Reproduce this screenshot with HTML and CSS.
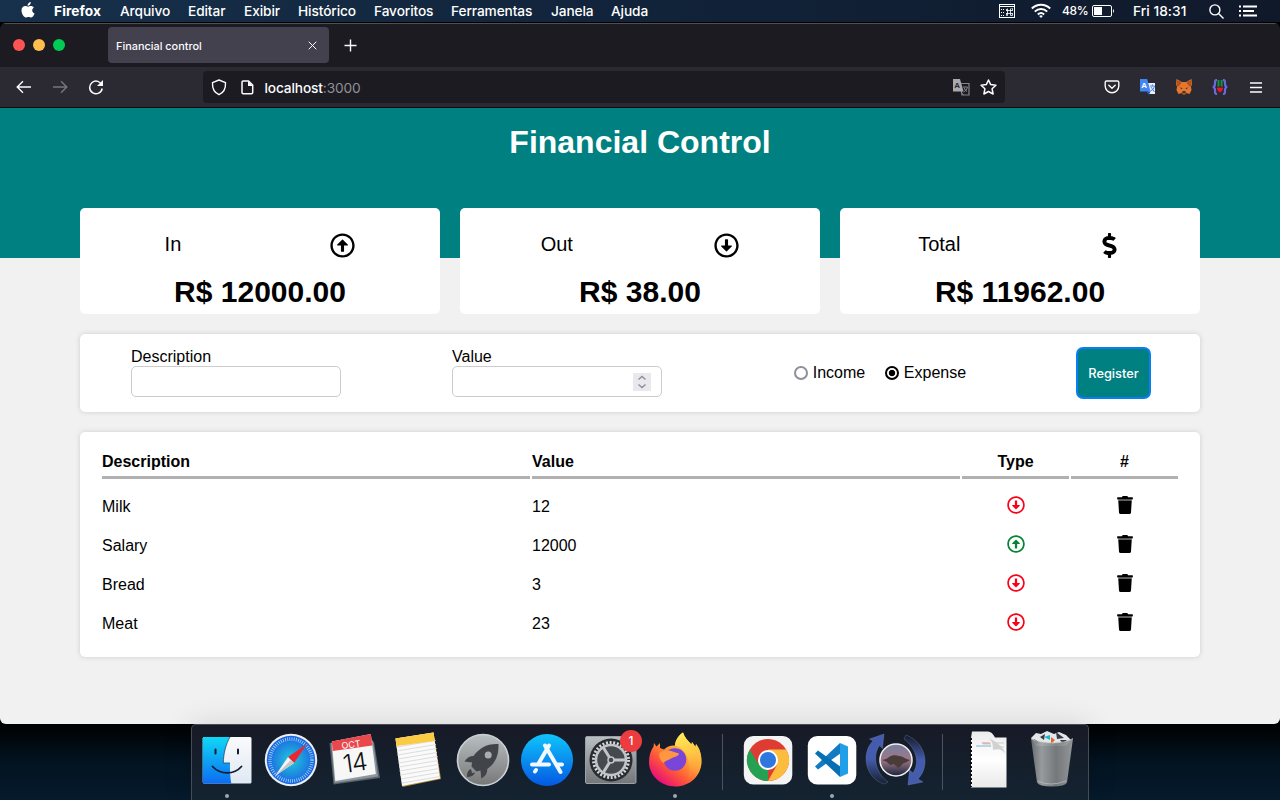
FILE: index.html
```html
<!DOCTYPE html>
<html lang="en">
<head>
<meta charset="utf-8">
<title>Financial control</title>
<link rel="stylesheet" href="styles.css">
</head>
<body>
<svg class="defs" width="0" height="0">
  <symbol id="up" viewBox="0 0 512 512"><path d="M256 504c137 0 248-111 248-248S393 8 256 8 8 119 8 256s111 248 248 248zm0-448c110.500 0 200 89.500 200 200s-89.500 200-200 200S56 366.500 56 256 145.500 56 256 56zm20 328h-40c-6.600 0-12-5.400-12-12V256h-67c-10.700 0-16-12.900-8.500-20.500l99-99c4.700-4.700 12.300-4.700 17 0l99 99c7.600 7.600 2.200 20.500-8.500 20.500h-67v116c0 6.600-5.400 12-12 12z"/></symbol>
  <symbol id="trash" viewBox="0 0 448 512"><path d="M432 32H312l-9.400-18.700A24 24 0 0 0 281.100 0H166.800a23.720 23.720 0 0 0-21.400 13.300L136 32H16A16 16 0 0 0 0 48v32a16 16 0 0 0 16 16h416a16 16 0 0 0 16-16V48a16 16 0 0 0-16-16zM53.200 467a48 48 0 0 0 47.900 45h245.800a48 48 0 0 0 47.900-45L416 128H32z"/><path d="M32 96h384v32H32z" opacity=".5"/></symbol>
</svg>

<header class="menubar">
  <svg class="apple" width="14" height="16" viewBox="0 0 14 16" fill="#fff"><path d="M9.800 0c.1 1.200-.4 2.100-1 2.800-.6.700-1.400 1.100-2.200 1C6.500 2.700 7 1.800 7.600 1.200 8.200.5 9.100.1 9.800 0zM7.200 4.700c.6 0 1.500-.7 2.700-.7 1.300 0 2.400.7 3 1.600-2.500 1.500-2.100 5 .7 6-.7 1.700-1.900 4-3.400 4-1 0-1.400-.6-2.700-.6-1.300 0-1.700.6-2.700.6-1.700 0-4.300-3.700-4.300-7C.500 5.600 2.200 4 4.200 4c1.200 0 2.200.7 3 .7z"/></svg>
  <nav class="menus"><b>Firefox</b><span>Arquivo</span><span>Editar</span><span>Exibir</span><span>Histórico</span><span>Favoritos</span><span>Ferramentas</span><span>Janela</span><span>Ajuda</span></nav>
  <div class="status">
    <svg width="16" height="14" viewBox="0 0 16 14"><rect x=".5" y=".5" width="15" height="13" fill="none" stroke="#fff"/><path d="M1 2.500h14" stroke="#fff"/><path d="M2 5.500h1M4 5.500h1M2 8.500h1M4 8.500h1M2 11.500h1M4 11.500h1" stroke="#fff"/><path d="M8.500 4.500v7M11.500 4.500v7M7 6.500h7M7 9.500h7M7.500 5v1.500M12.500 4.500h1v2M7.500 9.500v2h1M13.500 9.500v2h-2" stroke="#fff" stroke-width=".8" fill="none"/></svg>
    <svg class="wifi" width="20" height="16" viewBox="0 0 20 16" fill="none" stroke="#fff" stroke-width="2"><path d="M.8 5.500C6 .4 14 .4 19.200 5.500M3.800 8.600c3.600-3.500 8.800-3.500 12.400 0M6.800 11.500c2-1.800 4.400-1.800 6.400 0"/><path d="M8.100 13q1.900-1.400 3.800 0L10 15z" fill="#fff" stroke="none"/></svg>
    <span class="percent">48%</span>
    <svg class="battery" width="23" height="12" viewBox="0 0 23 12"><rect x=".5" y=".5" width="19" height="11" rx="1.500" fill="none" stroke="#fff"/><path d="M2 2h8v8H2z" fill="#fff"/><path d="M21 4q2 2 0 4z" fill="#fff"/></svg>
    <span class="clock">Fri 18:31</span>
    <svg class="search" width="15" height="15" viewBox="0 0 15 15" fill="none" stroke="#fff" stroke-width="1.400"><circle cx="5.900" cy="5.900" r="5"/><path d="m9.500 9.500 5 5"/></svg>
    <svg class="list" width="18" height="12" viewBox="0 0 18 12" stroke="#fff" stroke-width="2"><path d="M4 1.500h14M4 6h11M4 10.500h14M0 1.500h2M0 6h2M0 10.500h2"/></svg>
  </div>
</header>

<section class="window">
  <div class="tabbar">
    <div class="lights"><i class="red"></i><i class="amber"></i><i class="green"></i></div>
    <div class="tab"><span>Financial control</span><svg width="9" height="9" viewBox="0 0 9 9" stroke="#fbfbfe" stroke-width="1"><path d="m.7.700 7.600 7.600m0-7.600L.7 8.300"/></svg></div>
    <svg class="plus" width="13" height="13" viewBox="0 0 13 13" stroke="#fbfbfe" stroke-width="1.400"><path d="M6.500.5v12M.5 6.500h12"/></svg>
  </div>
  <div class="toolbar">
    <svg class="back" width="16" height="14" viewBox="0 0 16 14" fill="none" stroke="#fbfbfe" stroke-width="1.400"><path d="M15 7H1.500M7 1.200 1.200 7 7 12.800"/></svg>
    <svg class="forward" width="16" height="14" viewBox="0 0 16 14" fill="none" stroke="#77767e" stroke-width="1.400"><path d="M1 7h13.500M9 1.200 14.800 7 9 12.800"/></svg>
    <svg class="reload" width="16" height="16" viewBox="0 0 16 16" fill="none" stroke="#fbfbfe" stroke-width="1.500"><path d="M14 6.500A6.300 6.300 0 1 0 14.200 9.500"/><path d="M15 1v6H9z" fill="#fbfbfe" stroke="none"/></svg>
    <div class="address">
      <svg width="16" height="17" viewBox="0 0 16 17" fill="none" stroke="#fbfbfe" stroke-width="1.400"><path d="m8 1 6.500 2.700c.3 5.500-1.800 9.800-6.500 12C3.300 13.500 1.200 9.200 1.500 3.700z" stroke-linejoin="round"/></svg>
      <svg class="page-icon" width="13" height="15" viewBox="0 0 13 15" fill="none" stroke="#fbfbfe" stroke-width="1.500"><path d="M7.500 1H2.200Q1 1 1 2.200v10.300q0 1.200 1.200 1.200h8.300q1.200 0 1.200-1.200V5z"/><path d="M7 1v5h5z" fill="#fbfbfe" stroke="none"/></svg>
      <span class="url">localhost<em>:3000</em></span>
      <svg class="translate" width="17" height="17" viewBox="0 0 17 17"><path d="M7 4.500h9v11.500H9z" fill="none" stroke="#86858c" stroke-width="1.200"/><path d="M0 0h7l3.500 12.500H0z" fill="#a9a8ad"/><text x="1.300" y="9.200" class="glyph" fill="#29282f">A</text><path d="M10 8h4.500q-.5 3.500-4 5M11 8.500q1 3 3 4M8 13l2.500 3" stroke="#86858c" fill="none"/></svg>
      <svg class="star" width="17" height="16" viewBox="0 0 17 16" fill="none" stroke="#fbfbfe" stroke-width="1.500" stroke-linejoin="round"><path d="m8.500 1 2.200 4.600 5.200.7-3.800 3.500 1 5.200-4.600-2.500L3.900 15l1-5.200L1.100 6.300l5.200-.7z"/></svg>
    </div>
    <div class="extensions">
      <svg width="16" height="14" viewBox="0 0 16 14" fill="none" stroke="#fbfbfe" stroke-width="1.400" stroke-linecap="round" stroke-linejoin="round"><path d="M2.500 1h11q1.300 0 1.300 1.300V6a6.800 6.800 0 0 1-13.600 0V2.300Q1.200 1 2.500 1z"/><path d="M4.800 5.200 8 8.300l3.200-3.100"/></svg>
      <svg width="16" height="16" viewBox="0 0 16 16"><path d="M6 4h9v11H9z" fill="#eee"/><path d="M0 0h7.200l3.300 12.500H0z" fill="#4285f4"/><path d="m6 12.500 4.500 0L9 16z" fill="#2859b8"/><text x="1.300" y="9" class="glyph" fill="#fff">A</text><path d="M10 7h4.500q-.5 4-4 5M11 8l3.500 5M12.500 5.500V7" stroke="#4285f4" fill="none"/></svg>
      <svg width="16" height="16" viewBox="0 0 16 16"><path d="m.5 0 5.500 3h4l5.500-3 .5 5-1 3 .5 3-2 4-3-1-1.500 1.500h-2L5.500 14l-3 1-2-4 .5-3-1-3z" fill="#e8762d"/><path d="m6 3-3 4-2 .8L.4 1M10 3l3 4 2 .8.6-6.800" fill="#ad5520"/><path d="m3.500 8.500 3 .5-.8 1.300zM12.500 8.500l-3 .5.8 1.300z" fill="#32343a"/><path d="M6.500 12h3l.3 2.500H6.200z" fill="#44342f"/></svg>
      <svg width="16" height="16" viewBox="0 0 16 16" fill="none"><path d="M5 1.200C2.800 1 3 2.500 3 5 3 7 2.200 7.800.8 8 2.200 8.200 3 9 3 11c0 2.800-.2 4 2 3.800M11 1.200c2.200-.2 2 1.300 2 3.800 0 2 .8 2.800 2.200 3-1.400.2-2.200 1-2.200 3 0 2.800.2 4-2 3.800" stroke="#6869dc" stroke-width="2.200"/><path d="M6.500 1v6.500M9.600 1v6.500" stroke="#15933c" stroke-width="2"/><path d="M8 13.500c-5-4-3-6 0-4.500 3-1.500 5 .5 0 4.500z" fill="#f3142b"/></svg>
      <svg width="12" height="11" viewBox="0 0 12 11" stroke="#fbfbfe" stroke-width="1.300"><path d="M0 1h12M0 5.500h12M0 10h12"/></svg>
    </div>
  </div>

  <main class="page">
    <div class="banner"><h1>Financial Control</h1></div>
    <div class="content">
      <div class="cards">
        <article class="card"><div class="card-head"><span>In</span><svg width="25" height="25"><use href="#up"/></svg></div><strong>R$ 12000.00</strong></article>
        <article class="card"><div class="card-head"><span>Out</span><svg class="down" width="25" height="25"><use href="#up"/></svg></div><strong>R$ 38.00</strong></article>
        <article class="card"><div class="card-head"><span>Total</span><svg width="25" height="25" viewBox="-112 0 512 512"><path d="M209.200 233.400l-108-31.600C88.700 198.200 80 186.500 80 173.500c0-16.300 13.200-29.500 29.500-29.500h66.300c12.200 0 24.200 3.700 34.200 10.500 6.100 4.100 14.300 3.100 19.500-2l34.800-34c7.100-6.900 6.100-18.400-1.800-24.500C238 74.800 207.400 64.100 176 64V16c0-8.800-7.200-16-16-16h-32c-8.800 0-16 7.200-16 16v48h-2.500C45.800 64-5.400 118.700.5 183.600c4.200 46.100 39.400 83.600 83.800 96.600l102.500 30c12.500 3.700 21.200 15.300 21.200 28.300 0 16.300-13.200 29.500-29.500 29.500h-66.300C100 368 88 364.300 78 357.500c-6.100-4.100-14.300-3.100-19.500 2l-34.800 34c-7.100 6.900-6.100 18.400 1.800 24.500 24.500 19.200 55.100 29.900 86.500 30v48c0 8.800 7.200 16 16 16h32c8.800 0 16-7.200 16-16v-48.200c46.600-.9 90.300-28.600 105.700-72.700 21.500-61.600-14.600-124.800-72.500-141.700z"/></svg></div><strong>R$ 11962.00</strong></article>
      </div>
      <div class="form">
        <label class="field">Description<span class="input"></span></label>
        <label class="field value">Value<span class="input"><svg width="18" height="18" viewBox="0 0 18 18"><path d="M0 0h18v18H0z" fill="#e9e9ed"/><path d="m5.500 6.500 3.500-3 3.500 3M5.500 11.500l3.500 3 3.500-3" fill="none" stroke="#8f8f9d" stroke-width="1.500"/></svg></span></label>
        <div class="radios"><i class="radio"></i><span class="income">Income</span><i class="radio checked"></i><span>Expense</span></div>
        <button class="register">Register</button>
      </div>
      <div class="table">
        <div class="row head"><b>Description</b><b>Value</b><b>Type</b><b>#</b></div>
        <div class="row"><span>Milk</span><span>12</span><span><svg class="down expense" width="18" height="18"><use href="#up"/></svg></span><span><svg width="18" height="18"><use href="#trash"/></svg></span></div>
        <div class="row"><span>Salary</span><span>12000</span><span><svg class="gain" width="18" height="18"><use href="#up"/></svg></span><span><svg width="18" height="18"><use href="#trash"/></svg></span></div>
        <div class="row"><span>Bread</span><span>3</span><span><svg class="down expense" width="18" height="18"><use href="#up"/></svg></span><span><svg width="18" height="18"><use href="#trash"/></svg></span></div>
        <div class="row"><span>Meat</span><span>23</span><span><svg class="down expense" width="18" height="18"><use href="#up"/></svg></span><span><svg width="18" height="18"><use href="#trash"/></svg></span></div>
      </div>
    </div>
  </main>
</section>

<footer class="dock-area">
  <div class="dock">
    <div class="app running"><svg viewBox="0 0 64 64"><defs><linearGradient id="fb" x2="0" y2="1"><stop stop-color="#10d8f5"/><stop offset="1" stop-color="#0c6df2"/></linearGradient><linearGradient id="fw" x2="0" y2="1"><stop stop-color="#fafafc"/><stop offset="1" stop-color="#dfe9f3"/></linearGradient></defs><rect x="7.700" y="9" width="48.800" height="46.500" rx="1.500" fill="url(#fw)"/><path d="M9 9h26c-4 7-6.500 16-6.700 26H35c-.2 7 .2 14 1.300 20.500H9q-1.300 0-1.300-1.500V10.500Q7.700 9 9 9z" fill="url(#fb)"/><path d="M20.500 21.500v4M43 21.500v4" stroke="#151d2c" stroke-width="2" stroke-linecap="round"/><path d="M17.500 38.500c8 8.500 21.500 8.500 29 0" fill="none" stroke="#151d2c" stroke-width="1.800" stroke-linecap="round"/><path d="M35 9c-4 7-6.500 16-6.700 26H35" fill="none" stroke="#15365a" stroke-width=".7"/></svg></div>
    <div class="app"><svg viewBox="0 0 64 64"><defs><radialGradient id="sf"><stop stop-color="#21cbd8"/><stop offset="1" stop-color="#1b63e4"/></radialGradient></defs><circle cx="32" cy="32" r="26.200" fill="#edf0f1"/><circle cx="32" cy="32" r="24.200" fill="url(#sf)"/><circle cx="32" cy="32" r="21" fill="none" stroke="#b8e1fb" stroke-width="3.500" stroke-dasharray=".7 1.500"/><path d="M48 16 29 29l6 6z" fill="#ee2531"/><path d="m16 48 13-19 6 6z" fill="#f4f4f4"/><path d="m16 48 16-16 3 3z" fill="#c4c6ca"/></svg></div>
    <div class="app"><svg viewBox="0 0 64 64"><path d="m6.500 15 4 41.500L57 50 51 14z" fill="#59646c"/><path d="m8 15 3.500 40 43.500-6.500-5-36z" fill="#8d989d"/><path d="m8.800 13.500 39-7.500 5 40-40.500 7z" fill="#f7f7f7"/><path d="m8.800 13.500 39-7.500 1.500 11.500-39.500 5.500z" fill="#e9484c"/><g transform="rotate(-8 31 30)" text-anchor="middle" font-family="Inter"><text x="30" y="19.500" font-size="9" fill="#fff">OCT</text><text x="31" y="43.500" font-size="25" font-weight="300" letter-spacing="-1" fill="#111">14</text></g></svg></div>
    <div class="app"><svg viewBox="0 0 64 64"><path d="m8.500 10.500 38-6L54 51l-38.500 8z" fill="#b28b35"/><path d="m8.500 10.500 38-6L53 50.500 15 58z" fill="#fafafa"/><path d="m9.500 19 39-6.500M10 23l39-6.500M10.500 27l39-6.500M11 31l39-6.500M11.500 35l39-6.500M12 39l39-6.500M12.500 43l39-6.500M13 47l39-6.500M14 51l38-6.500M15 55l38-6.500" stroke="#ddd"/><path d="m8.500 10.500 38-6 1.300 8.500-38.300 5z" fill="#facb43"/></svg></div>
    <div class="app"><svg viewBox="0 0 64 64"><defs><linearGradient id="lp" x2="0" y2="1"><stop stop-color="#b8bfc2"/><stop offset="1" stop-color="#777"/></linearGradient></defs><circle cx="32" cy="32" r="25.500" fill="url(#lp)" stroke="#cbd0d2" stroke-width="1.600"/><path d="M47.500 16c-12-.5-19 4-25 12-4 0-7 2-9 5.500l7.500 1-.5 4 5 5 4-1 .8 8c4-2 6-5 6-9.500 8-6 11.500-13 11.200-25z" fill="#41454a"/><circle cx="37.200" cy="27" r="3.500" fill="#a7adb0"/><path d="M20 41c-3 1-4 4-4 8 4 0 7-1.500 8-4.500l-3 .5z" fill="#41454a"/></svg></div>
    <div class="app"><svg viewBox="0 0 64 64"><defs><linearGradient id="as" x2="0" y2="1"><stop stop-color="#0fc5fb"/><stop offset="1" stop-color="#0558e3"/></linearGradient></defs><circle cx="32" cy="32" r="26" fill="url(#as)"/><g stroke="#f1f8ff" stroke-width="4" stroke-linecap="round"><path d="M34 17.500 23 36.500M30 17.500l15.500 26.500M17 36.500h17M41 36.500h6M21 42l-1 1.500"/></g></svg></div>
    <div class="app"><svg viewBox="0 0 64 64"><defs><linearGradient id="sp" x2="0" y2="1"><stop stop-color="#b9c0c4"/><stop offset="1" stop-color="#747678"/></linearGradient></defs><rect x="6.500" y="8.500" width="50.500" height="47" rx="1.500" fill="url(#sp)" stroke="#9ba2a6"/><circle cx="32" cy="32" r="21.500" fill="#292c30"/><circle cx="32" cy="32" r="17.500" fill="none" stroke="#d4d7d8" stroke-width="3" stroke-dasharray="2 1.660"/><circle cx="32" cy="32" r="15" fill="#454a4f" stroke="#c2c5c7" stroke-width="2.500"/><path d="M32 32h15M32 32l-8-13M32 32l-8 13" stroke="#c2c5c7" stroke-width="3"/><circle cx="32" cy="32" r="3" fill="#42474b" stroke="#c2c5c7" stroke-width="1.500"/></svg><span class="badge">1</span></div>
    <div class="app running"><svg viewBox="0 0 64 64"><defs><linearGradient id="ff" x1="1" x2=".2" y2="1"><stop offset=".1" stop-color="#fff14d"/><stop offset=".4" stop-color="#ffad35"/><stop offset=".68" stop-color="#ff5a36"/><stop offset="1" stop-color="#e40085"/></linearGradient><linearGradient id="flame" x2=".2" y2="1"><stop stop-color="#fff05a"/><stop offset=".5" stop-color="#ffc744"/><stop offset="1" stop-color="#ff9640" stop-opacity="0"/></linearGradient></defs><path d="M40 4.500c1.500 5 5 8 8.500 12L49 14l3.500 5 .5-3c4 5 5.500 11 5.500 17.500C58.500 47.500 47 58.500 32.500 58.500S6 47.500 6 34c0-6 1.500-11 4.500-15.500L11 15l2.500 3.500L17 15v5l4 1.500C24 18.500 28 17 32 17.500c.5-6 4-10.500 8-13z" fill="url(#ff)"/><circle cx="32" cy="31.500" r="11.300" fill="#7a46d8"/><path d="M40 4.500c1.500 5 5 8 8.500 12L49 14l3.500 5 .5-3c4 5 5.500 11 5.500 17.500C58.500 44 52 52 41 55c5-5 7-14 4-24-2-7-7-12-13-13.500.5-6 4-10.500 8-13z" fill="url(#flame)"/><path d="M16 26c3-4 8-4.500 12-3l8 2.500c-.5 3-4 3-7 4.500-3 2-6 2-8.500 5-3-2-4.500-5.500-4.500-9z" fill="#ff9640"/></svg></div>
    <div class="separator"></div>
    <div class="app"><svg viewBox="0 0 64 64"><rect x="7.800" y="8" width="48.500" height="48.500" rx="9.500" fill="#f4f4f4"/><circle cx="32" cy="32" r="21" fill="#de3b33"/><path d="M32 53A21 21 0 0 1 13.800 21.500L23 37l9 5.500z" fill="#25a153"/><path d="M32 53a21 21 0 0 0 18.200-31.500H32L41 37z" fill="#fcbd3f"/><circle cx="32" cy="32" r="10" fill="#fff"/><circle cx="32" cy="32" r="8" fill="#2d77df"/></svg></div>
    <div class="app running"><svg viewBox="0 0 64 64"><rect x="7.800" y="8" width="48.500" height="48.500" rx="9.500" fill="#fff"/><path d="M40 15 15 38.500l3 3L41 25z" fill="#127bc1"/><path d="M40 49 15 25.500l3-3L41 39z" fill="#0870b2"/><path d="m40 15 8 3.500v27L40 49z" fill="#219fe9"/></svg></div>
    <div class="app"><svg viewBox="0 0 64 64"><defs><linearGradient id="sky" x2="0" y2="1"><stop stop-color="#7580a1"/><stop offset=".5" stop-color="#9d7788"/><stop offset="1" stop-color="#19243a"/></linearGradient><linearGradient id="arc-left" x2="0" y2="1"><stop offset=".5" stop-color="#455bad"/><stop offset="1" stop-color="#455bad" stop-opacity="0"/></linearGradient><linearGradient id="arc-right" x2="0" y2="1"><stop stop-color="#455bad" stop-opacity="0"/><stop offset=".5" stop-color="#455bad"/></linearGradient></defs><path d="M20 56C-1 49-2 23 9 13L5.500 11 20 6l-1.500 14.500-3-3C9 26 10 44 24 54z" fill="url(#arc-left)" stroke="#7d98cc" stroke-opacity=".5" stroke-width=".6"/><path d="M42 7c21 8 24 32 12 44l5 3-15 3 1.500-15 3.500 3c6-9 5-23-9-34z" fill="url(#arc-right)" stroke="#7d98cc" stroke-opacity=".5" stroke-width=".6"/><circle cx="32" cy="32" r="16" fill="url(#sky)" stroke="#f3f3f3" stroke-width="1.500"/><path d="M18 32c3-1 5-1 7-3 3-2 7-2 10-1 4 0 6 3 11 4-3 3-7 2-9 6l-3 2-4-4-4 1-3-3z" fill="#4a3c39"/></svg></div>
    <div class="separator"></div>
    <div class="app"><svg viewBox="0 0 64 64"><defs><linearGradient id="paper" x2="0" y2="1"><stop stop-color="#ececec"/><stop offset=".5" stop-color="#fff"/><stop offset="1" stop-color="#e9e9e9"/></linearGradient></defs><path d="M16 3.500h16q4 0 7 6h11.500v50H15V10z" fill="url(#paper)"/><path d="M15 10v49" stroke="#111" stroke-width="2" stroke-dasharray="2 2"/><path d="M27 16h8M38 15h10M38 19h10" stroke="#cdcdcd"/><path d="M20 18h15" stroke="#7ab6dc"/><path d="M26 15h8" stroke="#de8e84"/><path d="M33 10q4 3 4 12 9-3 13 5-3-10-17-17z" fill="#d1d1d1"/></svg></div>
    <div class="app"><svg viewBox="0 0 64 64"><defs><linearGradient id="bin"><stop stop-color="#6e7375"/><stop offset=".25" stop-color="#a1a4a5"/><stop offset=".6" stop-color="#7b7f81"/><stop offset="1" stop-color="#9da0a1"/></linearGradient></defs><path d="m11 10 5-5 5 1 6-3 7 3 5-2 7 3 5 5-5 6H16z" fill="#e4e6e7"/><path d="m20 9 5-3-1 6zM36 4l8 6-7 1zM14 11l5 3-3 2zM40 12h7l-4 4z" fill="#333c45"/><path d="m24 9 6-2v5z" fill="#15bad0"/><path d="m31 9 4 3-4 4z" fill="#de6534"/><path d="M11 10.500c10 6 32 6 42 0l-6 44q-2 4-15 4t-15-4z" fill="url(#bin)" opacity=".93"/><path d="M11 10.500c10 6 32 6 42 0M18 53q12 6 28 0" fill="none" stroke="#bcc0c1" stroke-width=".7"/></svg></div>
  </div>
</footer>
</body>
</html>
```
FILE: styles.css
```css
* { box-sizing: border-box; }
body {
  margin: 0;
  width: 1280px;
  height: 800px;
  overflow: hidden;
  display: flex;
  flex-direction: column;
  background: #000;
  color: #000;
  font-family: "Liberation Sans", Arial, sans-serif;
}
svg { display: block; flex: none; }
.defs { position: absolute; }

.menubar {
  flex: none;
  height: 23px;
  display: flex;
  align-items: center;
  padding-left: 21px;
  background: linear-gradient(90deg, #17304b, #11233a 50%, #10192a);
  border-bottom: 1px solid #000;
  color: #fff;
  font: 500 13.700px/22px Inter, sans-serif;
}
.apple { margin-top: -2px; }
.menus {
  margin-left: 19px;
  display: grid;
  grid-template-columns: 66px 68px 56px 54px 76px 77px 100px 60px 60px;
  letter-spacing: -.1px;
}
.menus b { letter-spacing: .1px; }
.status { margin-left: 328px; display: flex; align-items: center; }
.wifi { margin-left: 16px; margin-top: -1px; }
.percent { width: 30px; margin-left: 11px; font-size: 12px; letter-spacing: -.3px; }
.clock { width: 76px; margin-left: 18px; letter-spacing: .05px; white-space: nowrap; }
.search { margin-top: 1px; }
.list { margin-left: 15px; }

.window {
  flex: none;
  height: 701px;
  border-radius: 6px;
  overflow: hidden;
  background: #1c1b22;
}
.tabbar {
  height: 44px;
  display: flex;
  align-items: center;
  border-top: 1px solid #504f51;
}
.lights { display: flex; gap: 8px; width: 108px; padding-left: 13px; margin-top: -1px; }
.lights i { width: 12px; height: 12px; border-radius: 50%; }
.red { background: #ff5453; }
.amber { background: #ffbd4f; }
.green { background: #00cb55; }
.tab {
  width: 221px;
  height: 36px;
  display: flex;
  align-items: center;
  justify-content: space-between;
  margin-top: -1px;
  padding: 1px 12px 0 8px;
  border-radius: 4px;
  background: #42414d;
  color: #fbfbfe;
  font: 500 10.900px Inter, sans-serif;
}
.tab svg { margin-top: -1px; }
.plus { margin-left: 15px; }
.toolbar {
  height: 41px;
  display: flex;
  align-items: center;
  padding-left: 16px;
  background: #2b2a33;
  border-bottom: 1px solid #0c0c0d;
}
.forward { margin-left: 20px; }
.reload { margin-left: 20px; }
.address {
  width: 802px;
  height: 32px;
  display: flex;
  align-items: center;
  margin-left: 99px;
  padding-left: 8px;
  border-radius: 4px;
  background: #1c1b22;
}
.page-icon { margin-left: 14px; }
.url { width: 688px; margin: 2px 0 0 10.500px; color: #fbfbfe; font: 500 13.700px Inter, sans-serif; letter-spacing: -.13px; }
.url em { color: #909096; font-style: normal; font-weight: 400; }
.star { margin-left: 10.500px; }
.glyph { font: 700 8px "Liberation Sans", sans-serif; }
.extensions { display: flex; align-items: center; gap: 20px; margin-left: 99px; }
.extensions svg:last-child { margin-left: 2px; }

.page { height: 616px; background: #f1f1f1; }
.banner { height: 150px; padding-top: 15px; background: teal; color: #fff; text-align: center; }
h1 { margin: 0; font-size: 32px; line-height: 38px; }
.content {
  position: relative;
  display: flex;
  flex-direction: column;
  gap: 20px;
  width: 1120px;
  margin: -50px auto 0;
}
.cards { display: grid; grid-template-columns: repeat(3, 360px); gap: 20px; }
.card { height: 106px; padding: 24px 10px 0; border-radius: 5px; background: #fff; text-align: center; }
.card-head { display: flex; justify-content: space-around; align-items: center; height: 26px; font-size: 20px; line-height: 23px; }
.card-head span { margin-top: -2px; }
.card strong { display: block; margin-top: 16px; font-size: 30px; line-height: 35px; }
.down { transform: rotate(180deg); }
.form, .table { border-radius: 5px; background: #fff; box-shadow: 0 0 5px #ccc; }
.form { height: 78px; display: flex; align-items: center; padding-left: 51px; }
.field { width: 210px; margin-top: -2px; font-size: 16px; line-height: 19px; }
.value { margin-left: 111px; }
.input {
  height: 31px;
  display: flex;
  align-items: center;
  justify-content: flex-end;
  padding-right: 10px;
  border: 1px solid #ccc;
  border-radius: 5px;
}
.radios { width: 172px; display: flex; align-items: center; margin-left: 132px; font-size: 16px; }
.radio { width: 14px; height: 14px; margin-right: 4.700px; border: 2px solid #8f8f9d; border-radius: 50%; flex: none; }
.checked { border-color: #000; background: radial-gradient(circle, #000 0 2.800px, #fff 3.600px); }
.income { margin-right: 20px; }
.register {
  width: 75px;
  height: 52px;
  margin-left: 110px;
  padding: 0;
  border: 2px solid #0a7ff5;
  border-radius: 7px;
  background: teal;
  color: #fff;
  font: 500 12.800px Inter, sans-serif;
}
.table { height: 225px; padding: 20px 22px; }
.row {
  height: 39px;
  display: grid;
  grid-template-columns: 428px 428px 107px 107px;
  gap: 2px;
  align-items: center;
  font-size: 16px;
  line-height: 19px;
}
.row > :nth-child(n+3) { display: flex; justify-content: center; }
.row svg { margin: -3px 0 0 1px; }
.head { height: 27px; margin-bottom: 8px; }
.head b { height: 27px; border-bottom: 3px solid #b1b1b1; }
.expense { fill: #fa0019; }
.gain { fill: #078331; }

.dock-area {
  flex: none;
  height: 76px;
  display: flex;
  justify-content: center;
  background: linear-gradient(#000, #031321 50%, #051a2c);
}
.dock {
  position: relative;
  width: 898px;
  height: 76px;
  display: flex;
  padding: 3px 3px 0;
  border: 1px solid #484b51;
  border-bottom: 0;
  border-radius: 5px 5px 0 0;
  background: linear-gradient(#171a26, #142331);
  box-shadow: 0 0 30px rgba(0, 0, 0, .12);
}
.app { position: relative; width: 64px; height: 64px; flex: none; }
.app > svg { width: 64px; height: 64px; }
.running::after {
  content: "";
  position: absolute;
  left: 30px;
  top: 66px;
  width: 4px;
  height: 4px;
  border-radius: 50%;
  background: #a1a7af;
}
.badge {
  position: absolute;
  left: 41px;
  top: 2px;
  width: 22px;
  height: 22px;
  border-radius: 50%;
  background: #ed3c40;
  color: #fff;
  font: 500 12px/22px Inter, sans-serif;
  text-align: center;
}
.separator { width: 1px; height: 56px; margin: 6px 13px 0 15px; background: #4c535e; flex: none; }
.separator ~ .separator { margin-left: 14px; }
```
